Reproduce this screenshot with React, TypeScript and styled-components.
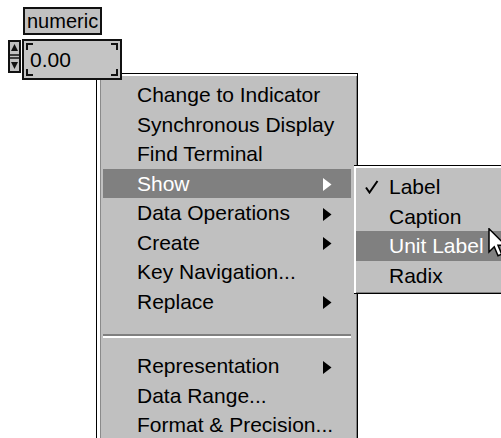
import styled, { createGlobalStyle } from 'styled-components'

const GlobalStyle = createGlobalStyle`
  html, body {
    margin: 0;
    padding: 0;
    background: #fff;
  }
  body {
    font-family: "Liberation Sans", Arial, sans-serif;
  }
`

const Stage = styled.div`
  position: relative;
  width: 501px;
  height: 438px;
  overflow: hidden;
  background: #fff;
`

const Control = styled.div`
  position: relative;
  z-index: 2;
  display: flex;
  flex-direction: column;
  align-items: flex-start;
  gap: 4px;
  padding: 7px 0 0 8px;
  width: max-content;
`

const OwnedLabel = styled.div`
  box-sizing: border-box;
  margin-left: 15px;
  height: 28px;
  padding: 0 2px;
  border: 2px solid #111;
  background: #c0c0c0;
  font-size: 20px;
  line-height: 24px;
  color: #000;
`

const NumericRow = styled.div`
  display: flex;
  align-items: flex-start;
  gap: 1px;
`

const Spinner = styled.svg`
  margin-top: 1px;
  display: block;
`

const DigitalBox = styled.div`
  position: relative;
  box-sizing: border-box;
  width: 100px;
  height: 41px;
  padding-left: 6px;
  border: 2px solid #111;
  background: #c4c4c4;
  font-size: 21px;
  line-height: 37px;
  color: #000;
`

interface CornerProps {
  $v: 'top' | 'bottom'
  $h: 'left' | 'right'
}

const Corner = styled.span<CornerProps>`
  position: absolute;
  width: 5px;
  height: 5px;
  ${({ $v }) => $v}: 2px;
  ${({ $h }) => $h}: 2px;
  border-${({ $v }) => $v}: 2px solid #111;
  border-${({ $h }) => $h}: 2px solid #111;
`

const Menu = styled.div`
  position: absolute;
  box-sizing: border-box;
  background: #c0c0c0;
  border: 1px solid #000;
  box-shadow:
    inset 0 2px 0 #fff,
    inset 3px 0 0 #fff,
    inset 4px 0 0 #8a8a8a,
    inset -1px -1px 0 #808080;
`

const MainMenu = styled(Menu)`
  z-index: 1;
  left: 96px;
  top: 73px;
  width: 262px;
  padding: 6px 6px 4px 6px;
`

const SubMenu = styled(Menu)`
  z-index: 3;
  left: 354px;
  top: 165px;
  width: 170px;
  border-left: 0;
  box-shadow: inset 0 2px 0 #fff, inset 2px 0 0 #fff, inset 0 -1px 0 #808080;
  padding: 6px 0 3px 2px;
`

interface ItemProps {
  $active?: boolean
}

const Item = styled.div<ItemProps>`
  display: flex;
  align-items: center;
  height: 29.5px;
  padding-right: 19px;
  font-size: 21px;
  line-height: 29.5px;
  white-space: nowrap;
  color: ${({ $active }) => ($active ? '#fff' : '#000')};
  background: ${({ $active }) => ($active ? '#808080' : 'transparent')};
`

const Lead = styled.span<{ $w: number }>`
  display: flex;
  align-items: center;
  flex: none;
  box-sizing: border-box;
  width: ${({ $w }) => $w}px;
  padding-left: 9px;
`

const Label = styled.span`
  flex: 1;
`

const Separator = styled.div`
  margin: 18px 0 13px;
  height: 0;
  border-top: 2px solid #808080;
  border-bottom: 2px solid #fff;
`

const Cursor = styled.svg`
  position: absolute;
  z-index: 4;
  left: 488px;
  top: 228px;
`

const Arrow = ({ light }: { light?: boolean }) => (
  <svg width="9" height="13" viewBox="0 0 9 13" style={{ marginTop: 3 }}>
    <polygon points="0,0 8.5,6.5 0,13" fill={light ? '#fff' : '#000'} />
  </svg>
)

const Check = () => (
  <svg width="14" height="14" viewBox="0 0 14 14">
    <polyline points="1,7.5 4.5,12.5 12.5,1" fill="none" stroke="#000" strokeWidth="2" />
  </svg>
)

const mainItems = [
  { label: 'Change to Indicator' },
  { label: 'Synchronous Display' },
  { label: 'Find Terminal' },
  { label: 'Show', sub: true, active: true },
  { label: 'Data Operations', sub: true },
  { label: 'Create', sub: true },
  { label: 'Key Navigation...' },
  { label: 'Replace', sub: true },
  { separator: true },
  { label: 'Representation', sub: true },
  { label: 'Data Range...' },
  { label: 'Format & Precision...' },
]

const showItems = [
  { label: 'Label', checked: true },
  { label: 'Caption' },
  { label: 'Unit Label', active: true },
  { label: 'Radix' },
]

export default function App() {
  return (
    <Stage>
      <GlobalStyle />
      <Control>
        <OwnedLabel>numeric</OwnedLabel>
        <NumericRow>
          <Spinner width="13" height="33" viewBox="0 0 13 33">
            <rect x="1" y="1" width="11" height="31" fill="#c0c0c0" stroke="#111" strokeWidth="2" />
            <polygon points="3,11 6.5,4 10,11" fill="#111" />
            <line x1="1" y1="15" x2="12" y2="15" stroke="#111" strokeWidth="1.5" />
            <line x1="1" y1="18" x2="12" y2="18" stroke="#111" strokeWidth="1.5" />
            <polygon points="3,22 6.5,29 10,22" fill="#111" />
          </Spinner>
          <DigitalBox>
            <Corner $v="top" $h="left" />
            <Corner $v="top" $h="right" />
            <Corner $v="bottom" $h="left" />
            <Corner $v="bottom" $h="right" />
            0.00
          </DigitalBox>
        </NumericRow>
      </Control>

      <MainMenu>
        {mainItems.map((item, i) =>
          item.separator ? (
            <Separator key={i} />
          ) : (
            <Item key={i} $active={item.active}>
              <Lead $w={34} />
              <Label>{item.label}</Label>
              {item.sub && <Arrow light={item.active} />}
            </Item>
          )
        )}
      </MainMenu>

      <SubMenu>
        {showItems.map((item) => (
          <Item key={item.label} $active={item.active}>
            <Lead $w={33}>{item.checked && <Check />}</Lead>
            <Label>{item.label}</Label>
          </Item>
        ))}
      </SubMenu>

      <Cursor width="20" height="30" viewBox="0 0 13 20">
        <polygon
          points="0.5,0.5 0.5,16 4,12.5 6.5,18.5 9,17.5 6.5,11.5 11.5,11.5"
          fill="#fff"
          stroke="#000"
          strokeWidth="1"
        />
      </Cursor>
    </Stage>
  )
}
